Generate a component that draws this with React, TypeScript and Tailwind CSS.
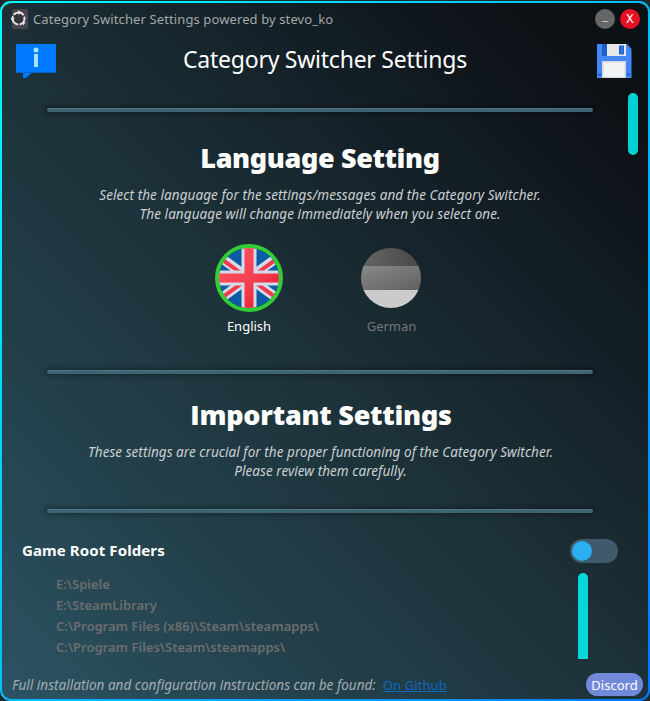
import React from "react";

function Divider() {
  return (
    <div className="mx-auto h-[4px] w-[546px] shrink-0 rounded-[2px] border-t border-[#4c7585] bg-[#3c6473] shadow-[0_0_5px_2px_rgba(0,0,0,0.3)]" />
  );
}

function AppIcon() {
  return (
    <svg width="18" height="20" viewBox="0 0 18 20">
      <rect x="2" y="0" width="16" height="20" rx="2.500" fill="#45444f" />
      <circle cx="8.500" cy="9.500" r="6" fill="#33343c" stroke="#e9e6e0" strokeWidth="2" strokeDasharray="11.200 1.370" strokeDashoffset="3" />
      <path d="M8 1.200l4 2.400-4 2.200zM.3 9.500l4.200-.6-1.400 3.600zM12 13l3.600.4-2.600 3z" fill="#e9e6e0" />
    </svg>
  );
}

function InfoIcon() {
  return (
    <svg width="40" height="34" viewBox="0 0 40 34">
      <path d="M0 0h40v29H16l-6 5H7v-5H0z" fill="#0061c8" />
      <path d="M0 0h40v28H0z" fill="#007bff" />
      <path d="M7 29h8l-6 5H7z" fill="#007bff" />
      <circle cx="20" cy="6" r="2.5" fill="#a5e3f7" />
      <path d="M18 10h4v13h-4z" fill="#a5e3f7" />
    </svg>
  );
}

function SaveIcon() {
  return (
    <svg width="35" height="34" viewBox="0 0 35 34">
      <path d="M0 0h30l4.500 5v29H0z" fill="#4488f8" />
      <path d="M5 0h5v12H5z" fill="#1b5fcb" />
      <path d="M10 0h19v12H10z" fill="#e6e8ea" />
      <rect x="22" y="1.5" width="5" height="9" rx=".7" fill="#1b5fcb" />
      <rect x="23.500" y="2.500" width="2.500" height="7" fill="#3474e0" />
      <path d="M5 17h24v17H5z" fill="#d5d8dc" />
      <path d="M6.500 18.500h21V33h-21z" fill="#f1f3f4" />
      <path d="M1 29.500h3v2H1zM30 29.500h3v2h-3z" fill="#1b5fcb" />
    </svg>
  );
}

function UkFlag() {
  return (
    <svg width="60" height="60" viewBox="0 0 60 60">
      <defs>
        <clipPath id="uk"><circle cx="30" cy="30" r="30" /></clipPath>
        <linearGradient id="red" x1="0" y1="0" x2="1" y2="1">
          <stop offset="0" stopColor="#ff5261" />
          <stop offset=".5" stopColor="#f64253" />
          <stop offset="1" stopColor="#e6142a" />
        </linearGradient>
      </defs>
      <g clipPath="url(#uk)">
        <path d="M0 0h60v60H0z" fill="#0d5ba5" />
        <path d="M-6 4L66 56M66 4L-6 56" stroke="#d4dae6" strokeWidth="9.500" />
        <path d="M-6 5L30 31M66 5L30 31M-6 56L30 30M30 30L66 56" stroke="#f23a4b" strokeWidth="4" />
        <path d="M30 0v60M0 30h60" stroke="#d4dae6" strokeWidth="15" />
        <path d="M25.500 0h9v25.500H60v9H34.500V60h-9V34.500H0v-9h25.500z" fill="url(#red)" />
      </g>
    </svg>
  );
}

function GermanFlag() {
  return (
    <svg width="60" height="60" viewBox="0 0 60 60">
      <defs>
        <clipPath id="de"><circle cx="30" cy="30" r="30" /></clipPath>
        <linearGradient id="black" x1="0" y1="0" x2="1" y2="0">
          <stop offset="0" stopColor="#656565" />
          <stop offset="1" stopColor="#474747" />
        </linearGradient>
        <linearGradient id="mid" x1="0" y1="0" x2="1" y2="1">
          <stop offset="0" stopColor="#898989" />
          <stop offset="1" stopColor="#606060" />
        </linearGradient>
      </defs>
      <g clipPath="url(#de)">
        <path d="M0 0h60v18H0z" fill="url(#black)" />
        <path d="M0 18h60v24H0z" fill="url(#mid)" />
        <path d="M0 42h60v18H0z" fill="#cbcbcb" />
      </g>
    </svg>
  );
}

const folders = ["E:\\Spiele", "E:\\SteamLibrary", "C:\\Program Files (x86)\\Steam\\steamapps\\", "C:\\Program Files\\Steam\\steamapps\\"];

export default function App() {
  return (
    <div className="h-[701px] w-[650px] overflow-hidden bg-[#20262a] pt-px font-['Noto_Sans','Open_Sans',sans-serif] whitespace-nowrap">
      <div className="h-[700px] rounded-[11px] bg-linear-to-br from-[#00ffff] to-[#0078ff] p-[2px]">
        <div className="flex h-[696px] flex-col rounded-[9px] bg-[linear-gradient(45deg,#2c5364_0%,#25444f_20%,#1c3037_50%,#10181f_80%,#0c1115_90%,#0a1214_100%)]">
          <div className="flex h-[32px] shrink-0 items-center pr-[8px] pl-[8px]">
            <AppIcon />
            <span className="mt-px ml-[5px] text-[13px] tracking-[0.11px] text-[#a4a8aa]">Category Switcher Settings powered by stevo_ko</span>
            <button className="ml-auto flex size-[20px] justify-center rounded-full bg-[#666] font-['Liberation_Mono',monospace] text-[10px] leading-[20px] font-bold text-white">_</button>
            <button className="ml-[5px] flex size-[20px] justify-center rounded-full bg-[#e81123] font-['Liberation_Mono',monospace] text-[13px] leading-[21px] text-white">X</button>
          </div>
          <div className="flex h-[55px] shrink-0 items-start justify-between pt-[9px] pr-[16px] pl-[14px]">
            <InfoIcon />
            <h1 className="-ml-[3px] text-[23px] leading-[30px] tracking-[-0.24px] text-white">Category Switcher Settings</h1>
            <SaveIcon />
          </div>
          <div className="flex h-[582px] shrink-0">
            <div className="flex w-[626px] flex-col pt-[18px] pl-[10px]">
              <Divider />
              <h2 className="mt-[26px] text-center text-[27px] leading-[40px] font-black tracking-[-0.37px] text-white">Language Setting</h2>
              <p className="mt-[8px] text-center text-[13.5px] leading-[19px] tracking-[0.07px] text-[#cbd0d2] italic">
                Select the language for the settings/messages and the Category Switcher.
                <br />
                The language will change immediately when you select one.
              </p>
              <div className="mt-[20px] flex justify-center gap-[78px] pr-[4px]">
                <div className="flex w-[68px] flex-col items-center">
                  <div className="rounded-full border-4 border-[#32cd32]"><UkFlag /></div>
                  <span className="mt-[4px] text-[13px] leading-[20px] text-white">English</span>
                </div>
                <div className="flex w-[60px] flex-col items-center pt-[4px]">
                  <GermanFlag />
                  <span className="mt-[8px] pl-px text-[13px] leading-[20px] text-[#73787a]">German</span>
                </div>
              </div>
              <div className="h-[34px] shrink-0" />
              <Divider />
              <h2 className="mt-[21px] pl-[2px] text-center text-[27px] leading-[40px] font-black tracking-[-0.23px] text-white">
                <span className="font-['Open_Sans'] font-extrabold">I</span>mportant Settings
              </h2>
              <p className="mt-[8px] pl-px text-center text-[13.5px] leading-[19px] tracking-[0.05px] text-[#cbd0d2] italic">
                These settings are crucial for the proper functioning of the Category Switcher.
                <br />
                Please review them carefully.
              </p>
              <div className="h-[28px] shrink-0" />
              <Divider />
              <div className="mt-[26px] flex h-[24px] shrink-0 items-center justify-between pl-[10px]">
                <h3 className="pb-[2px] text-[15px] leading-[22px] font-bold tracking-[0.1px] text-white">Game Root Folders</h3>
                <div className="mr-[10px] h-[24px] w-[48px] rounded-full bg-[#3f5a6c] p-[2px]">
                  <div className="size-[20px] rounded-full bg-[#2baef2]" />
                </div>
              </div>
              <div className="mt-[10px] flex h-[86px] shrink-0 justify-between pl-[44px]">
                <ul className="pt-px text-[13px] leading-[21px] font-semibold text-[#6b6d6e]">
                  {folders.map((f) => <li key={f}>{f}</li>)}
                </ul>
                <div className="mr-[40px] w-[10px] rounded-t-[5px] bg-[#06d8da]" />
              </div>
            </div>
            <div className="mt-[3px] h-[62px] w-[10px] rounded-[5px] bg-[#03d2d4]" />
          </div>
          <div className="flex h-[25px] shrink-0 items-center pr-[5px] pl-[10px]">
            <span className="pt-[2px] text-[13.5px] tracking-[0.02px] text-[#a5acb0] italic">Full installation and configuration instructions can be found:</span>
            <a className="ml-[7px] pt-[2px] text-[13px] tracking-[0.1px] text-[#0d68c0] underline">On Github</a>
            <button className="ml-auto h-[23px] w-[57px] rounded-full bg-[#7289da] pt-[2px] text-[13px] leading-[21px] text-white">Discord</button>
          </div>
        </div>
      </div>
    </div>
  );
}
